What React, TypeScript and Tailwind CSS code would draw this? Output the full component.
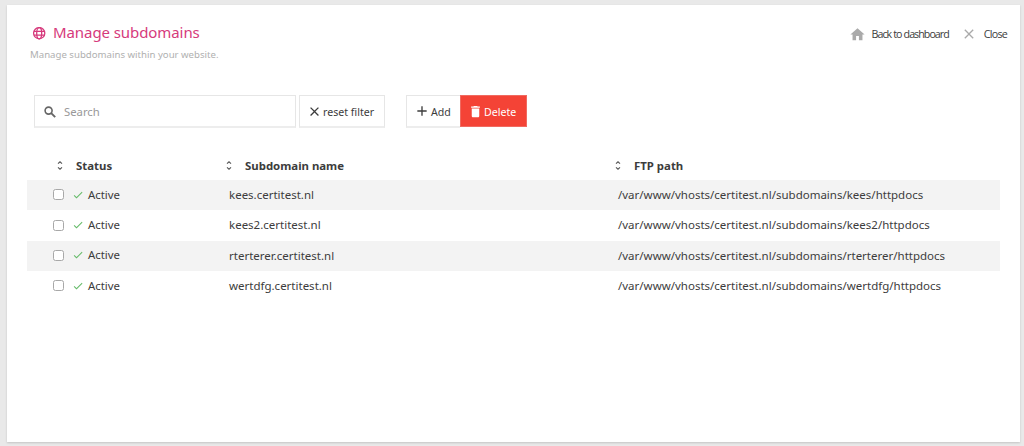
import { MdAdd, MdCheck, MdClose, MdDelete, MdHome } from "react-icons/md";

const rows = [
  { name: "kees.certitest.nl", path: "/var/www/vhosts/certitest.nl/subdomains/kees/httpdocs" },
  { name: "kees2.certitest.nl", path: "/var/www/vhosts/certitest.nl/subdomains/kees2/httpdocs" },
  { name: "rterterer.certitest.nl", path: "/var/www/vhosts/certitest.nl/subdomains/rterterer/httpdocs" },
  { name: "wertdfg.certitest.nl", path: "/var/www/vhosts/certitest.nl/subdomains/wertdfg/httpdocs" },
];

function GlobeIcon() {
  return (
    <svg className="ml-[3px] size-[13px] shrink-0" viewBox="0 0 13 13" fill="none" stroke="currentColor" strokeWidth="1.3">
      <circle cx="6.2" cy="6.2" r="5.6" />
      <ellipse cx="6.2" cy="6.2" rx="2.5" ry="5.6" />
      <path d="M1 4.3h10.4M1 8.1h10.4" />
    </svg>
  );
}

function SearchIcon() {
  return (
    <svg className="mt-px size-[12px] shrink-0" viewBox="0 0 12 12" fill="none" stroke="#666" strokeWidth="1.6">
      <circle cx="4.6" cy="4.6" r="3.5" />
      <path d="m7.2 7.2 4 4" strokeWidth="1.9" />
    </svg>
  );
}

function SortIcon() {
  return (
    <svg className="h-[9px] w-[6px] shrink-0" viewBox="0 0 6 9" fill="none" stroke="#555" strokeWidth="1.2">
      <path d="M1 2.6 3 0.9 5 2.6M1 6.4 3 8.1 5 6.4" />
    </svg>
  );
}

function HeaderCell({ label }: { label: string }) {
  return (
    <div className="flex items-center gap-[13px]">
      <SortIcon />
      <span>{label}</span>
    </div>
  );
}

export default function App() {
  return (
    <div className="h-[446px] w-[1024px] overflow-hidden bg-[#e9e9e9] pt-[5px] pl-[7px] font-['Noto_Sans',sans-serif] text-[#3c3c3c]">
      <main className="h-[437px] w-[1013px] bg-white shadow-[0_1px_2px_rgba(0,0,0,0.16)]">
        <header className="flex h-[90px] justify-between pt-[18px] pr-[13px] pl-[23px]">
          <div>
            <div className="flex h-[20px] items-center text-[#d63a7c]">
              <GlobeIcon />
              <h1 className="-mt-[2px] ml-[7px] text-[15px] leading-[20px] tracking-[-0.08px] whitespace-nowrap">
                Manage subdomains
              </h1>
            </div>
            <p className="mt-[5px] text-[9.65px] leading-[14px] whitespace-nowrap text-[#b0b0b0]">
              Manage subdomains within your website.
            </p>
          </div>
          <nav className="flex h-[22px] items-center font-['Open_Sans',sans-serif]">
            <a className="flex items-center gap-[6px] whitespace-nowrap">
              <MdHome className="size-[17px] text-[#aaa]" />
              <span className="text-[10.7px] tracking-[-0.97px] [word-spacing:0.2px]">Back to dashboard</span>
            </a>
            <a className="ml-[12px] flex items-center gap-[7px]">
              <MdClose className="size-[16px] text-[#aaa]" />
              <span className="text-[10.7px] tracking-[-0.75px]">Close</span>
            </a>
          </nav>
        </header>

        <div className="flex h-[33px] pl-[27px] text-[10.6px]">
          <label className="flex w-[262px] items-center border border-b-2 border-[#e6e6e6] border-b-[#ededed] pl-[9px]">
            <SearchIcon />
            <input
              className="mt-px ml-[8px] w-[200px] bg-transparent text-[11.3px] leading-[16px] outline-none placeholder:text-[#999]"
              placeholder="Search"
            />
          </label>
          <button className="ml-[3px] flex w-[86px] items-center gap-[1px] border border-b-2 border-[#e6e6e6] border-b-[#ededed] pl-[7px] whitespace-nowrap">
            <MdClose className="size-[15px]" />
            <span className="mt-[3px]">reset filter</span>
          </button>
          <button className="ml-[21px] flex w-[54px] items-center gap-[1px] border border-r-0 border-b-2 border-[#e6e6e6] border-b-[#ededed] pl-[7px]">
            <MdAdd className="size-[16px]" />
            <span className="mt-[3px]">Add</span>
          </button>
          <button className="flex h-[32px] w-[67px] items-center gap-[1px] border border-[#f06a60] bg-[#f44336] pl-[7px] text-white">
            <MdDelete className="size-[15px]" />
            <span className="mt-[3px]">Delete</span>
          </button>
        </div>

        <section className="mt-[22px] ml-[20px] w-[973px] text-[11.5px]">
          <div className="grid h-[30px] grid-cols-[169px_389px_1fr] items-center pt-px pl-[30px] text-[11.4px] font-bold">
            <HeaderCell label="Status" />
            <HeaderCell label="Subdomain name" />
            <HeaderCell label="FTP path" />
          </div>
          {rows.map((row) => (
            <div
              key={row.name}
              className="grid h-[30.4px] grid-cols-[176px_389px_1fr] items-center pl-[26px] whitespace-nowrap odd:bg-white even:bg-[#f3f3f3]"
            >
              <div className="flex items-center">
                <input
                  type="checkbox"
                  className="-mt-px size-[11px] appearance-none rounded-[2.5px] border border-[#a8a8a8] bg-white"
                />
                <MdCheck className="-mt-px ml-[8px] size-[12px] text-[#66bb6a]" />
                <span className="-mt-[2px] ml-[4px] text-[11.4px]">Active</span>
              </div>
              <span className="-mt-px">{row.name}</span>
              <span className="-mt-px">{row.path}</span>
            </div>
          ))}
        </section>
      </main>
    </div>
  );
}
